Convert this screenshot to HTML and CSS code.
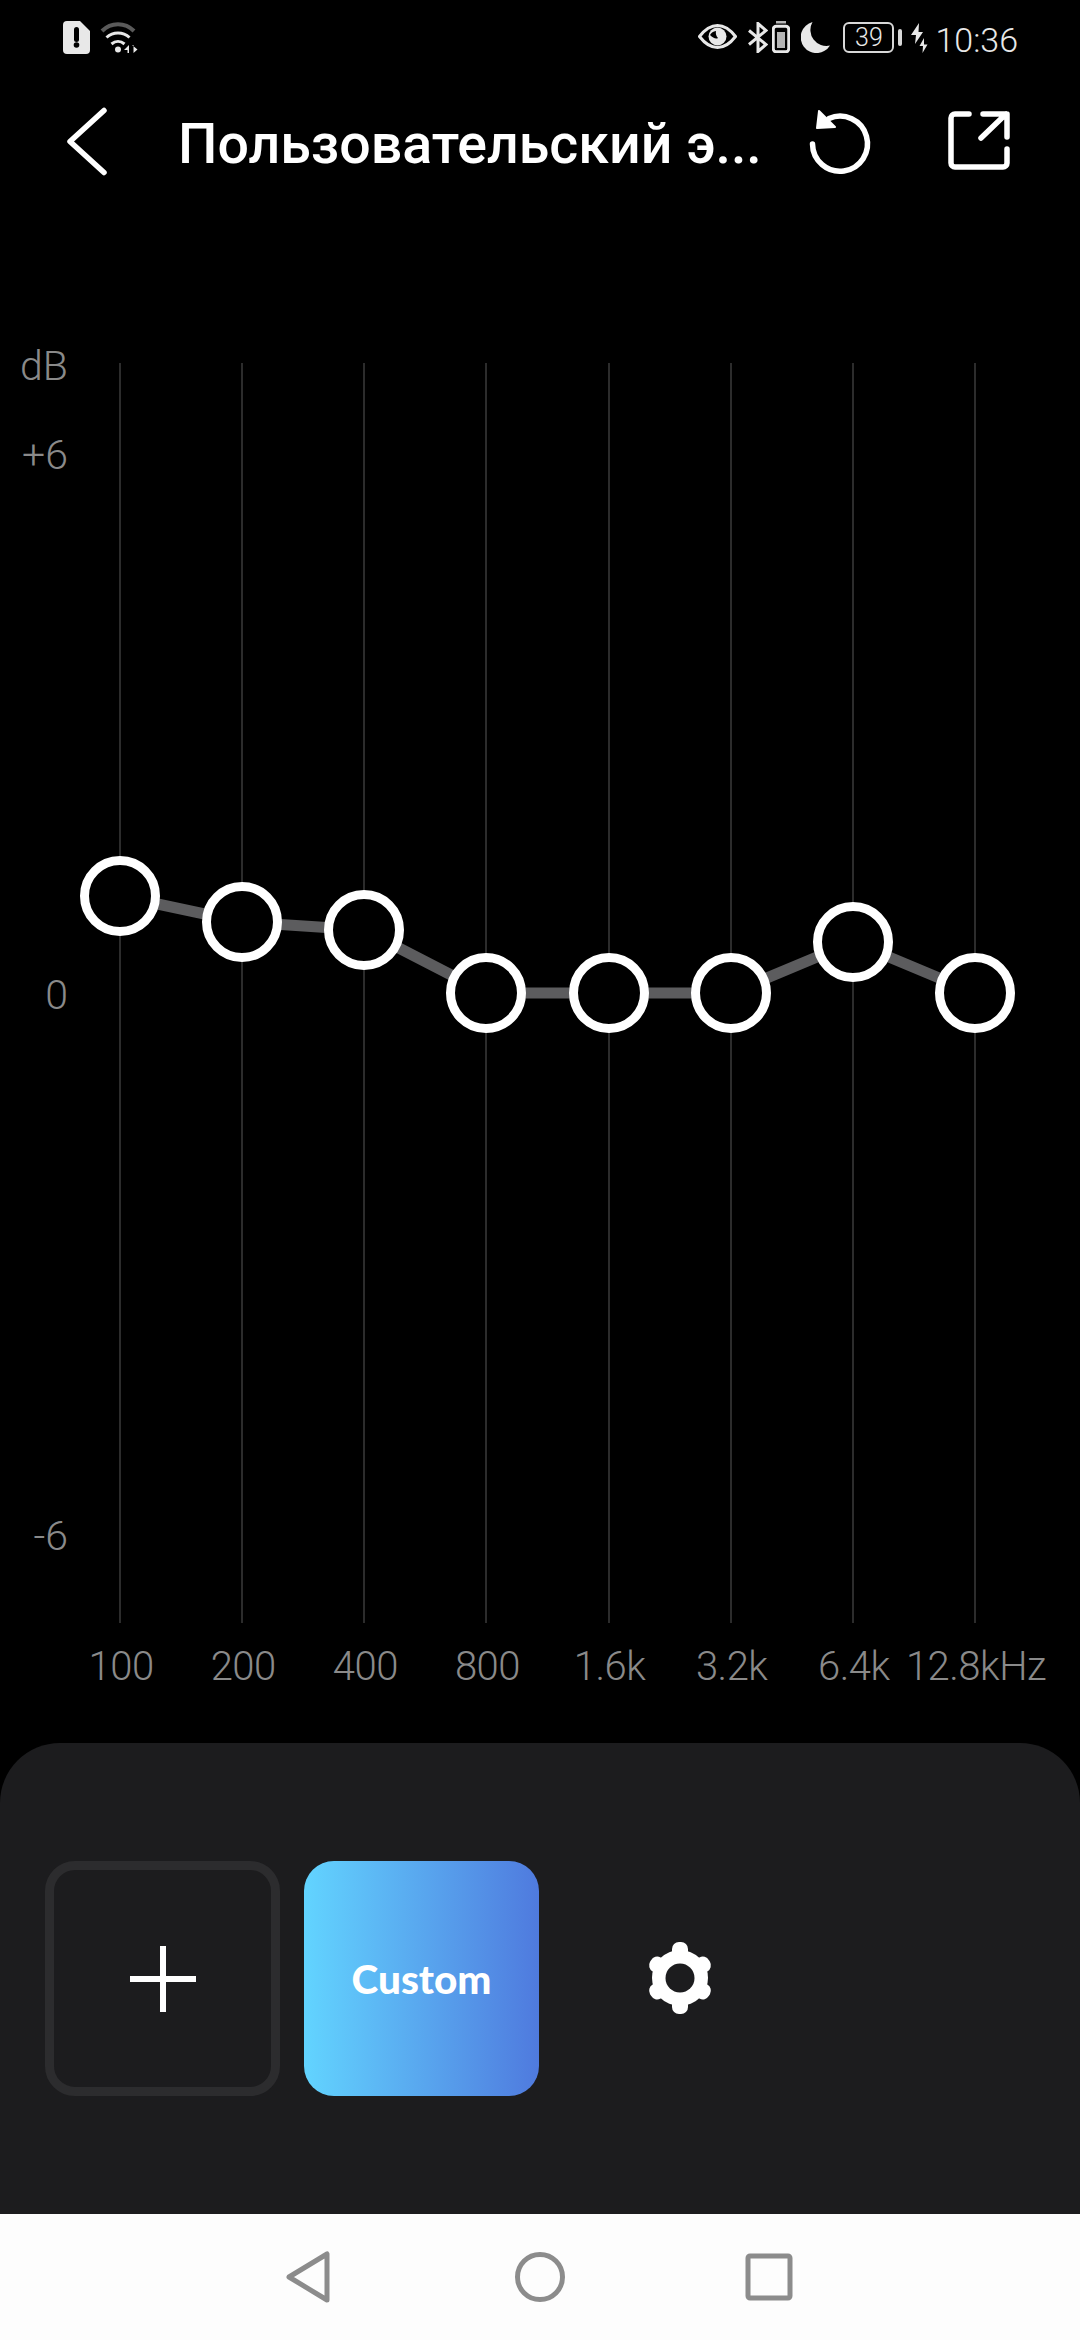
FILE: index.html
```html
<!DOCTYPE html>
<html lang="ru">
<head>
  <meta charset="UTF-8">
  <meta name="viewport" content="width=device-width, initial-scale=1.0">
  <title>Пользовательский эквалайзер</title>
  <link rel="stylesheet" href="styles.css">
</head>
<body>
  <div class="status">
    <div class="status-group">
      <svg class="ic-sim" viewBox="0 0 27 33"><path class="s-fill" d="M4 0H17L27 10V29a4 4 0 0 1-4 4H4a4 4 0 0 1-4-4V4a4 4 0 0 1 4-4Z"/><rect x="11" y="6" width="5" height="15" rx="2.500" fill="#000"/><circle cx="13.500" cy="24" r="2.800" fill="#000"/></svg>
      <svg class="ic-wifi" viewBox="0 0 38 31">
        <path class="s-dim" d="M2 9C11 0 25 0 34 9"/>
        <path class="s-line" d="M6.500 15.500C13 9.500 23 9.500 29.500 15.500"/>
        <path class="s-line" d="M11.500 22C15.500 18.500 20.500 18.500 24.500 22"/>
        <circle class="s-fill" cx="18" cy="27.500" r="3"/>
        <path class="s-fill" d="M29 23V31H27.500V28H24L29 23ZM32 23L37.500 27.500L33.500 31V23Z"/>
      </svg>
    </div>
    <div class="status-group status-right">
      <svg class="ic-eye" viewBox="0 0 39 25"><path class="s-line" d="M1.500 12.500C8 4 14 1.500 19.500 1.500S31 4 37.500 12.500C31 21 25 23.500 19.500 23.500S8 21 1.500 12.500Z"/><circle class="s-fill" cx="19.500" cy="12.500" r="9"/><path d="M12 11a7.500 7.500 0 0 1 6-4 8 8 0 0 0 2 7c-2 1.500-5 0-8-3Z" fill="#000"/></svg>
      <svg class="ic-bt" viewBox="0 0 21 31"><path class="s-line" d="M2 8.500L19 22.500L11 29.500V1.500L19 8.500L2 22.500"/></svg>
      <svg class="ic-cell" viewBox="0 0 18 32"><rect class="s-dim-fill" x="4" y="0" width="10" height="2.500"/><rect class="s-line" x="1.250" y="5.250" width="15.500" height="25.500" rx="3"/><rect class="s-dim-fill" x="5" y="11" width="8" height="16"/></svg>
      <svg class="ic-moon" viewBox="0 0 29 31"><path class="s-fill" d="M11.500 0A15.800 15.800 0 1 0 29 23.500A16 16 0 0 1 11.500 0Z"/></svg>
      <div class="batt"><span class="batt-num">39</span></div>
      <span class="batt-nub"></span>
      <svg class="ic-bolt" viewBox="0 0 17 31"><path class="s-fill" d="M8 1L0 13H5L4 22L12 10H7.500ZM13 16L8.500 24H12L11.500 31L16.500 22.500H13Z"/></svg>
      <span class="time">10:36</span>
    </div>
  </div>

  <div class="header">
    <svg class="ic-back" viewBox="0 0 42 70"><path d="M38 4.500L4 35.500L38 66.500"/></svg>
    <div class="title">Пользовательский э...</div>
    <div class="actions">
      <svg class="ic-action" viewBox="0 0 70 70"><path class="arc" d="M7.500 38A27.500 27.500 0 1 0 24 12.500"/><path class="head" d="M14 5L12 22L30 21Z"/></svg>
      <svg class="ic-action" viewBox="0 0 64 64"><path class="arc" d="M23 5H9a4 4 0 0 0-4 4V54a4 4 0 0 0 4 4H57a4 4 0 0 0 4-4V40"/><path class="arc" d="M37 5H61V28M60 5L35 29"/></svg>
    </div>
  </div>

  <svg class="chart" viewBox="0 340 1080 1290">
    <g class="grid-lines">
      <line x1="120" y1="363" x2="120" y2="1623"/>
      <line x1="242" y1="363" x2="242" y2="1623"/>
      <line x1="364" y1="363" x2="364" y2="1623"/>
      <line x1="486" y1="363" x2="486" y2="1623"/>
      <line x1="609" y1="363" x2="609" y2="1623"/>
      <line x1="731" y1="363" x2="731" y2="1623"/>
      <line x1="853" y1="363" x2="853" y2="1623"/>
      <line x1="975" y1="363" x2="975" y2="1623"/>
    </g>
    <g class="y-labels">
      <text x="68" y="380">dB</text>
      <text x="68" y="469">+6</text>
      <text x="68" y="1009">0</text>
      <text x="68" y="1550">-6</text>
    </g>
    <polyline class="curve" points="120,896 242,922 364,930 486,993 609,993 731,993 853,942 975,993"/>
    <g class="knobs">
      <circle cx="120" cy="896" r="35.500"/>
      <circle cx="242" cy="922" r="35.500"/>
      <circle cx="364" cy="930" r="35.500"/>
      <circle cx="486" cy="993" r="35.500"/>
      <circle cx="609" cy="993" r="35.500"/>
      <circle cx="731" cy="993" r="35.500"/>
      <circle cx="853" cy="942" r="35.500"/>
      <circle cx="975" cy="993" r="35.500"/>
    </g>
  </svg>

  <div class="freqs">
    <span>100</span>
    <span>200</span>
    <span>400</span>
    <span>800</span>
    <span>1.6k</span>
    <span>3.2k</span>
    <span>6.4k</span>
    <span>12.8kHz</span>
  </div>

  <div class="panel">
    <div class="tile tile-add"><span class="plus"></span></div>
    <div class="tile tile-custom">Custom</div>
    <svg class="ic-gear" viewBox="0 0 72 72">
      <circle cx="36" cy="36" r="28"/>
      <rect x="28" y="0" width="16" height="72" rx="7"/>
      <rect x="28" y="2" width="16" height="68" rx="7" transform="rotate(60 36 36)"/>
      <rect x="28" y="2" width="16" height="68" rx="7" transform="rotate(120 36 36)"/>
      <circle class="hole" cx="36" cy="36" r="14.500"/>
    </svg>
  </div>

  <div class="nav">
    <svg class="ic-nav" viewBox="0 0 46 52"><path d="M3 26L41 3V49Z"/></svg>
    <svg class="ic-nav" viewBox="0 0 52 52"><circle cx="26" cy="26" r="22.500"/></svg>
    <svg class="ic-nav" viewBox="0 0 48 48"><rect x="3" y="3" width="42" height="42" rx="2"/></svg>
  </div>
</body>
</html>
```

FILE: styles.css
```css
* {
  box-sizing: border-box;
}

body {
  margin: 0;
  width: 1080px;
  height: 2340px;
  background: #000;
  color: #fff;
  font-family: Roboto, "Noto Sans", sans-serif;
  display: flex;
  flex-direction: column;
  overflow: hidden;
}

svg {
  display: block;
  flex: none;
}

/* status bar */
.status {
  height: 74px;
  padding: 21px 62px 0 63px;
  display: flex;
  justify-content: space-between;
  align-items: flex-start;
}

.status-group {
  display: flex;
  align-items: flex-start;
  gap: 10px;
}

.s-fill { fill: #e8e8e8; }
.s-dim-fill { fill: #b5b5b5; }
.s-line { fill: none; stroke: #e8e8e8; stroke-width: 3; }
.s-dim { fill: none; stroke: #5a5a5a; stroke-width: 4; }

.ic-sim { width: 27px; height: 33px; }
.ic-wifi { width: 38px; height: 31px; margin-top: 1px; }
.ic-eye { width: 39px; height: 25px; margin-top: 3px; }
.ic-bt { width: 21px; height: 31px; margin-top: 1px; }
.ic-cell { width: 18px; height: 32px; margin-left: -6px; }
.ic-moon { width: 29px; height: 31px; margin: 1px 3px 0 1px; }
.ic-bolt { width: 17px; height: 31px; margin: 1px 0 0 -1px; }

.batt {
  width: 51px;
  height: 31px;
  margin-top: 1px;
  border: 2.500px solid #d8d8d8;
  border-radius: 6px;
  display: flex;
  align-items: center;
  justify-content: center;
}

.batt-num {
  font-size: 25px;
  font-weight: 300;
  color: #e8e8e8;
  line-height: 1;
}

.batt-nub {
  width: 4px;
  height: 17px;
  margin: 8px 0 0 -6px;
  background: #d8d8d8;
  border-radius: 2px;
}

.time {
  font-size: 34px;
  font-weight: 300;
  line-height: 38px;
  margin-left: -3px;
  color: #e8e8e8;
}

/* header */
.header {
  height: 134px;
  padding-left: 66px;
  padding-right: 70px;
  display: flex;
  align-items: center;
}

.ic-back {
  width: 42px;
  height: 70px;
}

.ic-back path {
  fill: none;
  stroke: #fff;
  stroke-width: 5.500;
  stroke-linecap: round;
  stroke-linejoin: round;
}

.title {
  flex: 1;
  min-width: 0;
  margin-top: 6px;
  margin-left: 70px;
  font-size: 55.500px;
  font-weight: 500;
  white-space: nowrap;
}

.actions {
  display: flex;
  align-items: center;
  gap: 71px;
}

.ic-action {
  width: 70px;
  height: 70px;
}

.ic-action + .ic-action {
  width: 64px;
  height: 64px;
}

.ic-action .arc {
  fill: none;
  stroke: #fff;
  stroke-width: 5.500;
  stroke-linecap: round;
  stroke-linejoin: round;
}

.ic-action .head {
  fill: #fff;
  stroke: #fff;
  stroke-width: 2;
  stroke-linejoin: round;
}

/* chart */
.chart {
  width: 1080px;
  height: 1290px;
  margin-top: 132px;
}

.grid-lines line {
  stroke: #2c2c2c;
  stroke-width: 2;
}

.y-labels text {
  font-size: 41px;
  font-weight: 300;
  fill: #8a8a8a;
  text-anchor: end;
}

.curve {
  fill: none;
  stroke: #5c5c5e;
  stroke-width: 11;
}

.knobs circle {
  fill: #000;
  stroke: #fff;
  stroke-width: 9;
}

.freqs {
  margin-top: 14px;
  padding-left: 60px;
  display: grid;
  grid-template-columns: repeat(8, 122.140px);
  justify-items: center;
  font-size: 40px;
  font-weight: 300;
  line-height: 46px;
  color: #8a8a8a;
  letter-spacing: -0.500px;
  white-space: nowrap;
}

/* preset panel */
.panel {
  height: 471px;
  margin-top: auto;
  padding: 118px 0 0 45px;
  background: #1c1c1e;
  border-radius: 60px 60px 0 0;
  display: flex;
  align-items: flex-start;
  gap: 24px;
}

.tile {
  width: 235px;
  height: 235px;
  border-radius: 30px;
  display: flex;
  align-items: center;
  justify-content: center;
}

.tile-add {
  border: 9px solid #2c2c2e;
}

.plus {
  position: relative;
  width: 66px;
  height: 6px;
  background: #fff;
}

.plus::after {
  content: "";
  position: absolute;
  left: 30px;
  top: -30px;
  width: 6px;
  height: 66px;
  background: #fff;
}

.tile-custom {
  background: linear-gradient(90deg, #62d4ff, #4f7ade);
  font-family: Lato, Roboto, sans-serif;
  font-size: 40.500px;
  font-weight: 900;
}

.ic-gear {
  width: 72px;
  height: 72px;
  margin: 81px 0 0 81px;
  fill: #fff;
}

.ic-gear .hole {
  fill: #1c1c1e;
}

/* nav bar */
.nav {
  height: 126px;
  background: #fdfdfd;
  position: relative;
}

.ic-nav {
  position: absolute;
  top: 37px;
  width: 52px;
  height: 52px;
  fill: none;
  stroke: #8c8c8c;
  stroke-width: 5;
  stroke-linejoin: round;
}

.ic-nav:nth-child(1) { left: 286px; width: 46px; }
.ic-nav:nth-child(2) { left: 514px; }
.ic-nav:nth-child(3) { left: 745px; top: 39px; width: 48px; height: 48px; }
```
